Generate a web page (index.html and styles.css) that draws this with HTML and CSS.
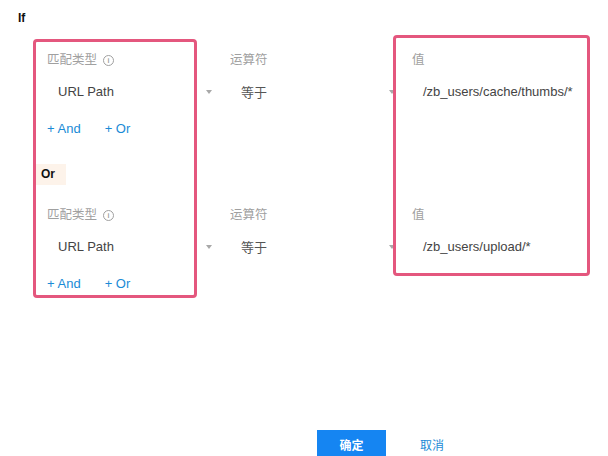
FILE: index.html
```html
<!DOCTYPE html>
<html>
<head>
<meta charset="utf-8">
<link rel="stylesheet" href="styles.css">
</head>
<body>
<div class="page">
  <div class="title">If</div>

  <div class="group">
    <div class="cols">
      <div class="field">
        <div class="label">匹配类型 <span class="info">i</span></div>
        <div class="select"><span>URL Path</span><span class="arrow"></span></div>
      </div>
      <div class="field">
        <div class="label">运算符</div>
        <div class="select"><span class="op">等于</span><span class="arrow"></span></div>
      </div>
      <div class="field">
        <div class="label">值</div>
        <div class="select"><span>/zb_users/cache/thumbs/*</span></div>
      </div>
    </div>
    <div class="links"><span>+ And</span><span>+ Or</span></div>
  </div>

  <div class="or">Or</div>

  <div class="group group2">
    <div class="cols">
      <div class="field">
        <div class="label">匹配类型 <span class="info">i</span></div>
        <div class="select"><span>URL Path</span><span class="arrow"></span></div>
      </div>
      <div class="field">
        <div class="label">运算符</div>
        <div class="select"><span class="op">等于</span><span class="arrow"></span></div>
      </div>
      <div class="field">
        <div class="label">值</div>
        <div class="select"><span>/zb_users/upload/*</span></div>
      </div>
    </div>
    <div class="links"><span>+ And</span><span>+ Or</span></div>
  </div>

  <div class="footer">
    <div class="btn-primary">确定</div>
    <div class="btn-text">取消</div>
  </div>

  <div class="mark mark1"></div>
  <div class="mark mark2"></div>
</div>
</body>
</html>
```

FILE: styles.css
```css
html, body {
  margin: 0;
  padding: 0;
  background: #ffffff;
  overflow: hidden;
}
body {
  font-family: "Liberation Sans", "Noto Sans CJK SC", sans-serif;
  font-size: 13px;
  color: #444444;
  width: 608px;
  height: 456px;
}
.page {
  position: relative;
  width: 608px;
  height: 456px;
  overflow: hidden;
}
.title {
  margin-top: 8px;
  padding-left: 18px;
  line-height: 20px;
  font-size: 12px;
  font-weight: bold;
  color: #111111;
}
.group {
  margin-top: 22px;
  padding-left: 47px;
}
.group2 {
  margin-top: 20px;
}
.cols {
  display: grid;
  grid-template-columns: 183px 182px 170px;
}
.label {
  line-height: 20px;
  height: 20px;
  font-size: 12.5px;
  color: #a0a0a0;
  display: flex;
  align-items: center;
}
.info {
  display: inline-flex;
  align-items: center;
  justify-content: center;
  width: 9px;
  height: 9px;
  border: 1px solid #a0a0a0;
  border-radius: 50%;
  font-size: 7px;
  line-height: 9px;
  font-weight: bold;
  color: #a0a0a0;
  margin-left: 6px;
}
.select {
  height: 42px;
  display: flex;
  align-items: center;
  justify-content: space-between;
  padding-left: 11px;
  width: 151px;
  color: #444444;
}
.op {
  color: #555555;
}
.arrow {
  width: 0;
  height: 0;
  border-left: 3.5px solid transparent;
  border-right: 3.5px solid transparent;
  border-top: 4px solid #a8a8a8;
  margin-right: -3px;
  margin-top: 2px;
}
.links {
  margin-top: 7px;
  line-height: 20px;
  display: flex;
  gap: 24px;
  color: #1a8bd6;
}
.or {
  margin-top: 25px;
  margin-left: 34px;
  width: 25px;
  height: 21px;
  line-height: 21px;
  padding-left: 7px;
  background: #fdf3ea;
  font-size: 12px;
  font-weight: bold;
  color: #111111;
}
.footer {
  margin-top: 136px;
  padding-left: 317px;
  display: flex;
  align-items: center;
  gap: 34px;
}
.btn-primary {
  width: 69px;
  height: 32px;
  line-height: 32px;
  text-align: center;
  background: #1585f2;
  color: #ffffff;
  font-size: 12px;
  font-weight: bold;
}
.btn-text {
  color: #1a8bd6;
  font-size: 12px;
  line-height: 32px;
}
.mark {
  position: absolute;
  border: 3px solid #e4577e;
  border-radius: 4px;
  box-sizing: border-box;
}
.mark1 {
  left: 33px;
  top: 39px;
  width: 164px;
  height: 259px;
}
.mark2 {
  left: 393px;
  top: 35px;
  width: 197px;
  height: 241px;
}
```
